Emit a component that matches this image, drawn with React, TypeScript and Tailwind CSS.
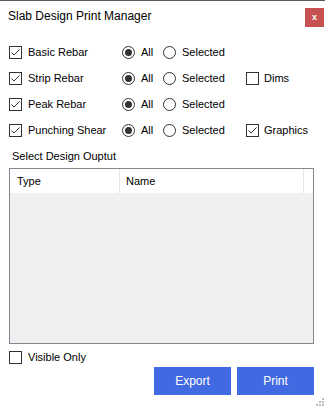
const font = { fontFamily: '"Liberation Sans", Arial, sans-serif' };

function CheckBox({ checked }: { checked: boolean }) {
  return (
    <span className="flex h-[13px] w-[13px] shrink-0 items-center justify-center border border-[#333333] bg-white">
      {checked && (
        <svg width="11" height="11" viewBox="0 0 11 11">
          <polyline points="1.5,5.5 4,8 9.5,2.5" fill="none" stroke="#333333" strokeWidth="1" />
        </svg>
      )}
    </span>
  );
}

function Radio({ checked }: { checked: boolean }) {
  return (
    <span className="flex h-[13px] w-[13px] shrink-0 items-center justify-center rounded-full border border-[#333333] bg-white">
      {checked && <span className="h-[7px] w-[7px] rounded-full bg-[#333333]" />}
    </span>
  );
}

const rows = [
  { label: 'Basic Rebar', extra: null as null | { label: string; checked: boolean } },
  { label: 'Strip Rebar', extra: { label: 'Dims', checked: false } },
  { label: 'Peak Rebar', extra: null },
  { label: 'Punching Shear', extra: { label: 'Graphics', checked: true } },
];

export default function App() {
  return (
    <div
      className="relative flex h-[407px] w-[325px] flex-col overflow-hidden border-t border-[#5a5a5a] bg-white text-[11px] text-black"
      style={font}
    >
      {/* title bar */}
      <div className="flex h-[38px] shrink-0 items-start justify-between">
        <span className="pl-[8px] pt-[8px] text-[12px] leading-[14px]">Slab Design Print Manager</span>
        <div className="mr-[1px] mt-[7px] flex h-[19px] w-[19px] items-center justify-center bg-[#c75050] text-[9px] font-bold leading-none text-white">
          x
        </div>
      </div>

      {/* options */}
      <div className="flex flex-col pl-[9px]">
        {rows.map((r) => (
          <div key={r.label} className="flex h-[26px] items-center">
            <div className="flex w-[113px] items-center gap-[6px]">
              <CheckBox checked />
              <span>{r.label}</span>
            </div>
            <div className="flex w-[41px] items-center gap-[6px]">
              <Radio checked />
              <span>All</span>
            </div>
            <div className="flex w-[83px] items-center gap-[6px]">
              <Radio checked={false} />
              <span>Selected</span>
            </div>
            {r.extra && (
              <div className="flex items-center gap-[5px]">
                <CheckBox checked={r.extra.checked} />
                <span>{r.extra.label}</span>
              </div>
            )}
          </div>
        ))}
      </div>

      <div className="mt-[7px] h-[13px] pl-[12px] leading-[13px]">Select Design Ouptut</div>

      {/* list */}
      <div className="ml-[9px] mt-[5px] flex h-[176px] w-[305px] flex-col border border-[#828790] bg-[#f0f0f0]">
        <div className="flex h-[24px] shrink-0 bg-white">
          <div className="flex w-[110px] items-center border-r border-[#e5e5e5] pl-[7px]">Type</div>
          <div className="flex w-[184px] items-center border-r border-[#e5e5e5] pl-[6px]">Name</div>
          <div className="flex-1" />
        </div>
      </div>

      <div className="mt-[7px] flex h-[13px] items-center gap-[6px] pl-[9px]">
        <CheckBox checked={false} />
        <span>Visible Only</span>
      </div>

      <div className="mt-[3px] flex justify-end gap-[6px] pr-[11px]">
        <button className="h-[28px] w-[77px] bg-[#4169e1] text-[12px] text-white">Export</button>
        <button className="h-[28px] w-[77px] bg-[#4169e1] text-[12px] text-white">Print</button>
      </div>

      {/* resize grip */}
      <svg className="absolute bottom-[1px] right-[1px]" width="9" height="9" viewBox="0 0 9 9">
        <rect x="7" y="1" width="2" height="2" fill="#bcbcbc" />
        <rect x="4" y="4" width="2" height="2" fill="#bcbcbc" />
        <rect x="7" y="4" width="2" height="2" fill="#bcbcbc" />
        <rect x="1" y="7" width="2" height="2" fill="#bcbcbc" />
        <rect x="4" y="7" width="2" height="2" fill="#bcbcbc" />
        <rect x="7" y="7" width="2" height="2" fill="#bcbcbc" />
      </svg>
    </div>
  );
}
